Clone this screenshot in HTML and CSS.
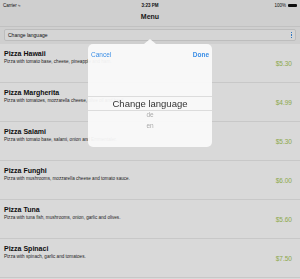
FILE: index.html
```html
<!DOCTYPE html>
<html lang="en">
<head>
    <meta charset="UTF-8">
    <meta name="viewport" content="width=device-width, initial-scale=1.0">
    <title>Menu</title>
    <link rel="stylesheet" href="styles.css">
</head>
<body>
    <div class="status-bar">
        <span class="carrier">Carrier &#8776;</span>
        <span class="clock">3:23 PM</span>
        <span class="battery">100% <i class="battery-icon"></i></span>
    </div>
    <div class="nav-bar">Menu</div>

    <div class="search-wrap">
        <div class="select-field">
            <span>Change language</span>
            <span class="dots"><i></i><i></i><i></i></span>
        </div>
    </div>

    <ul class="menu-list">
        <li class="menu-item">
            <div class="item-text">
                <div class="item-title">Pizza Hawaii</div>
                <div class="item-desc">Pizza with tomato base, cheese, pineapple and ham.</div>
            </div>
            <div class="item-price">$5.30</div>
        </li>
        <li class="menu-item">
            <div class="item-text">
                <div class="item-title">Pizza Margherita</div>
                <div class="item-desc">Pizza with tomatoes, mozzarella cheese, olive oil and basil.</div>
            </div>
            <div class="item-price">$4.99</div>
        </li>
        <li class="menu-item">
            <div class="item-text">
                <div class="item-title">Pizza Salami</div>
                <div class="item-desc">Pizza with tomato base, salami, onion and Emmentaler.</div>
            </div>
            <div class="item-price">$5.30</div>
        </li>
        <li class="menu-item">
            <div class="item-text">
                <div class="item-title">Pizza Funghi</div>
                <div class="item-desc">Pizza with mushrooms, mozzarella cheese and tomato sauce.</div>
            </div>
            <div class="item-price">$6.00</div>
        </li>
        <li class="menu-item">
            <div class="item-text">
                <div class="item-title">Pizza Tuna</div>
                <div class="item-desc">Pizza with tuna fish, mushrooms, onion, garlic and olives.</div>
            </div>
            <div class="item-price">$5.60</div>
        </li>
        <li class="menu-item">
            <div class="item-text">
                <div class="item-title">Pizza Spinaci</div>
                <div class="item-desc">Pizza with spinach, garlic and tomatoes.</div>
            </div>
            <div class="item-price">$7.50</div>
        </li>
    </ul>

    <!-- dim layer + language popover -->
    <div class="dim"></div>
    <div class="popover">
        <div class="popover-head">
            <span class="pop-btn">Cancel</span>
            <span class="pop-btn done">Done</span>
        </div>
        <div class="picker">
            <div class="picker-row selected">Change language</div>
            <div class="picker-row">de</div>
            <div class="picker-row">en</div>
        </div>
    </div>
</body>
</html>
```

FILE: styles.css
```css
/* base */
body {
    margin: 0;
    background-color: #ffffff;
    font-family: "Liberation Sans", Arial, sans-serif;
    color: #111;
    overflow: hidden;
}

/* status bar */
.status-bar {
    height: 10px;
    background-color: #f4f4f4;
    display: flex;
    align-items: center;
    justify-content: space-between;
    padding: 0 3px;
    font-size: 4.5px;
}

.carrier,
.battery {
    width: 40px;
}

.battery {
    display: flex;
    justify-content: flex-end;
    align-items: center;
    gap: 2px;
}

.battery-icon {
    display: inline-block;
    width: 9px;
    height: 3px;
    background-color: #111;
    border-radius: 1px;
}

.clock {
    font-weight: bold;
}

/* nav bar */
.nav-bar {
    height: 16px;
    background-color: #f4f4f4;
    text-align: center;
    line-height: 14px;
    font-size: 7px;
    font-weight: bold;
    color: #1a1a1a;
    border-bottom: 1px solid #e3e3e3;
}

/* search / select */
.search-wrap {
    padding: 2px 4px 3px 4px;
    background-color: #f4f4f4;
}

.select-field {
    height: 10px;
    border: 1px solid #dedede;
    border-radius: 2px;
    background-color: #fbfbfb;
    display: flex;
    align-items: center;
    justify-content: space-between;
    padding: 0 3px;
    font-size: 5px;
}

.dots {
    display: flex;
    flex-direction: column;
    gap: 1px;
}

.dots i {
    display: block;
    width: 1.5px;
    height: 1.5px;
    background-color: #3a8ee6;
}

/* menu list */
.menu-list {
    list-style: none;
    margin: 0;
    padding: 0;
}

.menu-item {
    height: 38px;
    border-bottom: 1px solid #ececec;
    display: flex;
    align-items: center;
    padding: 0 8px 0 4px;
}

.item-text {
    flex: 1;
    align-self: flex-start;
    padding-top: 5px;
}

.item-title {
    font-size: 7px;
    font-weight: bold;
    line-height: 9px;
}

.item-desc {
    font-size: 4.6px;
    line-height: 7px;
    color: #2a2a2a;
}

.item-price {
    font-size: 6.5px;
    color: #a6c85a;
}

/* overlay */
.dim {
    position: fixed;
    top: 0;
    left: 0;
    right: 0;
    bottom: 0;
    background-color: rgba(0, 0, 0, 0.15);
}

.popover {
    position: absolute;
    left: 88px;
    top: 44px;
    width: 124px;
    height: 103px;
    background-color: rgba(250, 250, 250, 0.94);
    border-radius: 5px;
}

.popover:before {
    content: '';
    position: absolute;
    left: 56px;
    top: -5px;
    border-left: 6px solid transparent;
    border-right: 6px solid transparent;
    border-bottom: 5px solid rgba(250, 250, 250, 0.94);
}

.popover-head {
    display: flex;
    justify-content: space-between;
    padding: 7px 3px 0 3px;
    font-size: 6.5px;
}

.pop-btn {
    color: #3a8ee6;
}

.pop-btn.done {
    font-weight: bold;
}

.picker {
    margin-top: 38px;
}

.picker-row {
    text-align: center;
    font-size: 6.5px;
    line-height: 11px;
    color: #aaaaaa;
}

.picker-row.selected {
    font-size: 9.5px;
    line-height: 13px;
    margin-bottom: -2px;
    color: #333;
    border-top: 1px solid #dcdcdc;
    border-bottom: 1px solid #dcdcdc;
}
```
